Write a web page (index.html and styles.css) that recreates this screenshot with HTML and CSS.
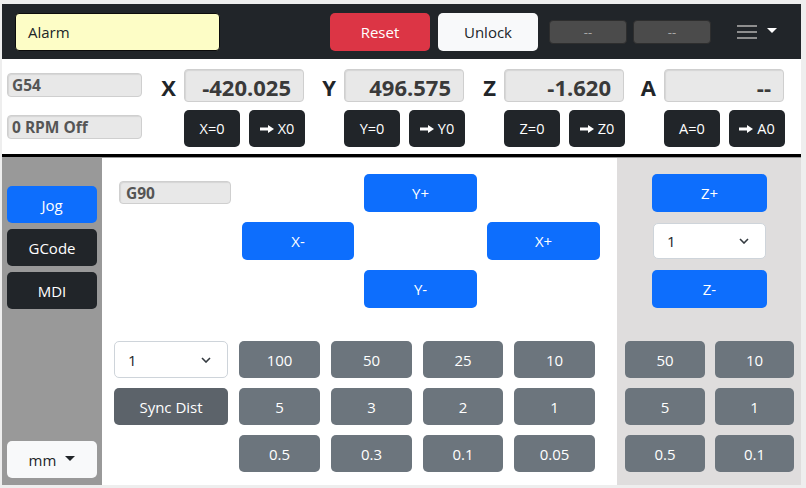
FILE: index.html
```html
<!DOCTYPE html>
<html lang="en">
<head>
<meta charset="utf-8">
<title>CNC Control</title>
<link rel="stylesheet" href="styles.css">
</head>
<body>
<div class="app">
  <header class="navbar">
    <div class="status">Alarm</div>
    <button class="btn btn-danger nav-btn reset">Reset</button>
    <button class="btn btn-light nav-btn unlock">Unlock</button>
    <div class="nav-box first">--</div>
    <div class="nav-box">--</div>
    <div class="menu">
      <svg class="burger" width="20" height="14" viewBox="0 0 20 14"><path d="M0 1h20M0 7h20M0 13h20" stroke="#8e8e8e" stroke-width="2"/></svg>
      <svg class="caret" width="10" height="5" viewBox="0 0 10 5"><path d="M0 0h10L5 5z" fill="#fff"/></svg>
    </div>
  </header>

  <section class="dro">
    <div class="dro-info">
      <div class="ro info">G54</div>
      <div class="ro info">0 RPM Off</div>
    </div>
    <div class="axis">
      <div class="axis-label">X</div>
      <div class="axis-body">
        <div class="ro value">-420.025</div>
        <div class="axis-btns">
          <button class="btn btn-dark">X=0</button>
          <button class="btn btn-dark"><svg class="arrow" width="14" height="10" viewBox="0 0 14 10"><path d="M0 3.5h8V1l6 4-6 4V6.5H0z" fill="#fff"/></svg>X0</button>
        </div>
      </div>
    </div>
    <div class="axis">
      <div class="axis-label">Y</div>
      <div class="axis-body">
        <div class="ro value">496.575</div>
        <div class="axis-btns">
          <button class="btn btn-dark">Y=0</button>
          <button class="btn btn-dark"><svg class="arrow" width="14" height="10" viewBox="0 0 14 10"><path d="M0 3.5h8V1l6 4-6 4V6.5H0z" fill="#fff"/></svg>Y0</button>
        </div>
      </div>
    </div>
    <div class="axis">
      <div class="axis-label">Z</div>
      <div class="axis-body">
        <div class="ro value">-1.620</div>
        <div class="axis-btns">
          <button class="btn btn-dark">Z=0</button>
          <button class="btn btn-dark"><svg class="arrow" width="14" height="10" viewBox="0 0 14 10"><path d="M0 3.5h8V1l6 4-6 4V6.5H0z" fill="#fff"/></svg>Z0</button>
        </div>
      </div>
    </div>
    <div class="axis">
      <div class="axis-label">A</div>
      <div class="axis-body">
        <div class="ro value">--</div>
        <div class="axis-btns">
          <button class="btn btn-dark">A=0</button>
          <button class="btn btn-dark"><svg class="arrow" width="14" height="10" viewBox="0 0 14 10"><path d="M0 3.5h8V1l6 4-6 4V6.5H0z" fill="#fff"/></svg>A0</button>
        </div>
      </div>
    </div>
  </section>

  <main class="work">
    <nav class="side">
      <button class="btn btn-primary side-btn">Jog</button>
      <button class="btn btn-dark side-btn">GCode</button>
      <button class="btn btn-dark side-btn">MDI</button>
      <button class="btn btn-light side-btn units">mm<svg class="caret" width="10" height="5" viewBox="0 0 10 5"><path d="M0 0h10L5 5z" fill="#212529"/></svg></button>
    </nav>

    <section class="jog">
      <div class="pad">
        <div class="ro mode">G90</div>
        <button class="btn btn-primary yplus">Y+</button>
        <button class="btn btn-primary xminus">X-</button>
        <button class="btn btn-primary xplus">X+</button>
        <button class="btn btn-primary yminus">Y-</button>
      </div>
      <div class="steps">
        <div class="select">1<svg width="10" height="6" viewBox="0 0 10 6"><path d="M1 1l4 4 4-4" fill="none" stroke="#343a40" stroke-width="1.6"/></svg></div>
        <button class="btn btn-secondary">100</button>
        <button class="btn btn-secondary">50</button>
        <button class="btn btn-secondary">25</button>
        <button class="btn btn-secondary">10</button>
        <button class="btn sync">Sync Dist</button>
        <button class="btn btn-secondary">5</button>
        <button class="btn btn-secondary">3</button>
        <button class="btn btn-secondary">2</button>
        <button class="btn btn-secondary">1</button>
        <span class="spacer"></span>
        <button class="btn btn-secondary">0.5</button>
        <button class="btn btn-secondary">0.3</button>
        <button class="btn btn-secondary">0.1</button>
        <button class="btn btn-secondary">0.05</button>
      </div>
    </section>

    <section class="zpanel">
      <div class="zcol">
        <button class="btn btn-primary zbtn">Z+</button>
        <div class="select zsel">1<svg width="10" height="6" viewBox="0 0 10 6"><path d="M1 1l4 4 4-4" fill="none" stroke="#343a40" stroke-width="1.6"/></svg></div>
        <button class="btn btn-primary zbtn">Z-</button>
      </div>
      <div class="zsteps">
        <button class="btn btn-secondary">50</button>
        <button class="btn btn-secondary">10</button>
        <button class="btn btn-secondary">5</button>
        <button class="btn btn-secondary">1</button>
        <button class="btn btn-secondary">0.5</button>
        <button class="btn btn-secondary">0.1</button>
      </div>
    </section>
  </main>
</div>
</body>
</html>
```

FILE: styles.css
```css
* { box-sizing: border-box; }

body {
  margin: 0;
  background: #eeeeee;
  font-family: "Open Sans", "Noto Sans", sans-serif;
  color: #212529;
}

.app {
  margin: 4px 0 0 2px;
  width: 799px;
  height: 481px;
  display: flex;
  flex-direction: column;
  background: #fff;
}

.btn {
  border: 0;
  border-radius: 5px;
  font-family: inherit;
  font-size: 15px;
  color: #fff;
  display: flex;
  align-items: center;
  justify-content: center;
  padding: 0;
  margin: 0;
}
.btn-primary { background: #0d6efd; }
.btn-dark { background: #212529; }
.btn-danger { background: #dc3545; }
.btn-light { background: #f8f9fa; color: #212529; }
.btn-secondary { background: #6c757d; }
.sync { background: #5c636a; }

/* navbar */
.navbar {
  height: 55px;
  flex: none;
  background: #212529;
  display: flex;
  align-items: center;
  padding-left: 13px;
}
.status {
  width: 205px;
  height: 38px;
  background: #fdfdc6;
  border: 1px solid #0b0b0b;
  border-radius: 4px;
  padding-left: 12px;
  display: flex;
  align-items: center;
  font-size: 15px;
  color: #212529;
}
.nav-btn { width: 100px; height: 38px; }
.reset { margin-left: 110px; }
.unlock { margin-left: 8px; }
.nav-box {
  width: 78px;
  height: 24px;
  margin-left: 6px;
  background: #4b4b4b;
  border: 1px solid #2e2e2e;
  border-radius: 4px;
  color: #a8a8a8;
  font-size: 13px;
  display: flex;
  align-items: center;
  justify-content: center;
}
.nav-box.first { margin-left: 11px; }
.menu {
  margin-left: 26px;
  display: flex;
  align-items: center;
}
.menu .caret { margin-left: 10px; margin-top: -3px; }

/* DRO */
.dro {
  height: 98px;
  flex: none;
  display: flex;
  padding-top: 10px;
  border-bottom: 3px solid #000;
}
.ro {
  background: #e8e8e8;
  border: 1px solid #cfcfcf;
  box-shadow: inset 1px 1px 1px rgba(0,0,0,0.08);
  border-radius: 4px;
  color: #555;
  font-weight: 700;
  display: flex;
  align-items: center;
}
.dro-info {
  width: 143px;
  padding-left: 5px;
  padding-top: 4px;
  display: flex;
  flex-direction: column;
  gap: 18px;
}
.info {
  width: 135px;
  height: 24px;
  padding-left: 4px;
  font-size: 15.5px;
}
.axis {
  width: 160px;
  display: flex;
}
.axis-label {
  width: 40px;
  height: 33px;
  padding-right: 8px;
  text-align: right;
  font-size: 22px;
  font-weight: 700;
  line-height: 36px;
  color: #212529;
}
.axis-body { width: 121px; }
.value {
  width: 120px;
  height: 33px;
  justify-content: flex-end;
  padding-right: 12px;
  font-size: 22px;
  color: #3a3a3a;
  padding-top: 2px;
}
.axis-btns {
  margin-top: 8px;
  display: flex;
  gap: 9px;
}
.axis-btns .btn { width: 56px; height: 37px; font-size: 14.5px; }
.arrow { margin-right: 4px; }

/* work area */
.work {
  flex: 1;
  display: flex;
  border-top: 1px solid #999;
  min-height: 0;
}
.side {
  width: 100px;
  background: #999999;
  padding: 28px 5px 7px;
  display: flex;
  flex-direction: column;
  gap: 6px;
}
.side-btn { width: 90px; height: 37px; flex: none; }
.units { margin-top: auto; color: #212529; }
.units .caret { margin-left: 9px; margin-top: -2px; }

.jog {
  width: 515px;
  padding: 16px 0 0 12px;
}
.pad {
  display: grid;
  grid-template-columns: 113px 112px 113px 113px;
  grid-template-rows: 38px 38px 38px;
  column-gap: 10px;
  row-gap: 10px;
  padding-left: 5px;
}
.pad .btn { height: 38px; }
.mode {
  grid-column: 1;
  grid-row: 1;
  width: 112px;
  height: 23px;
  margin-top: 7px;
  padding-left: 6px;
  font-size: 15.5px;
}
.yplus { grid-column: 3; grid-row: 1; }
.xminus { grid-column: 2; grid-row: 2; }
.xplus { grid-column: 4; grid-row: 2; }
.yminus { grid-column: 3; grid-row: 3; }

.steps {
  margin-top: 33px;
  display: grid;
  grid-template-columns: 114px 81px 81px 80px 81px;
  grid-auto-rows: 37px;
  column-gap: 11px;
  row-gap: 10px;
}
.select {
  background: #fff;
  border: 1px solid #ced4da;
  border-radius: 5px;
  display: flex;
  align-items: center;
  justify-content: space-between;
  padding: 0 16px 0 13px;
  font-size: 15px;
  color: #212529;
}

.zpanel {
  flex: 1;
  background: #dfdddd;
  padding: 16px 0 0 8px;
}
.zcol {
  margin-left: 27px;
  width: 115px;
  display: flex;
  flex-direction: column;
  gap: 11px;
}
.zbtn { height: 38px; }
.zsel { height: 36px; margin: 0 1px; }
.zsteps {
  margin-top: 33px;
  display: grid;
  grid-template-columns: 80px 79px;
  grid-auto-rows: 37px;
  column-gap: 10px;
  row-gap: 10px;
}
```
